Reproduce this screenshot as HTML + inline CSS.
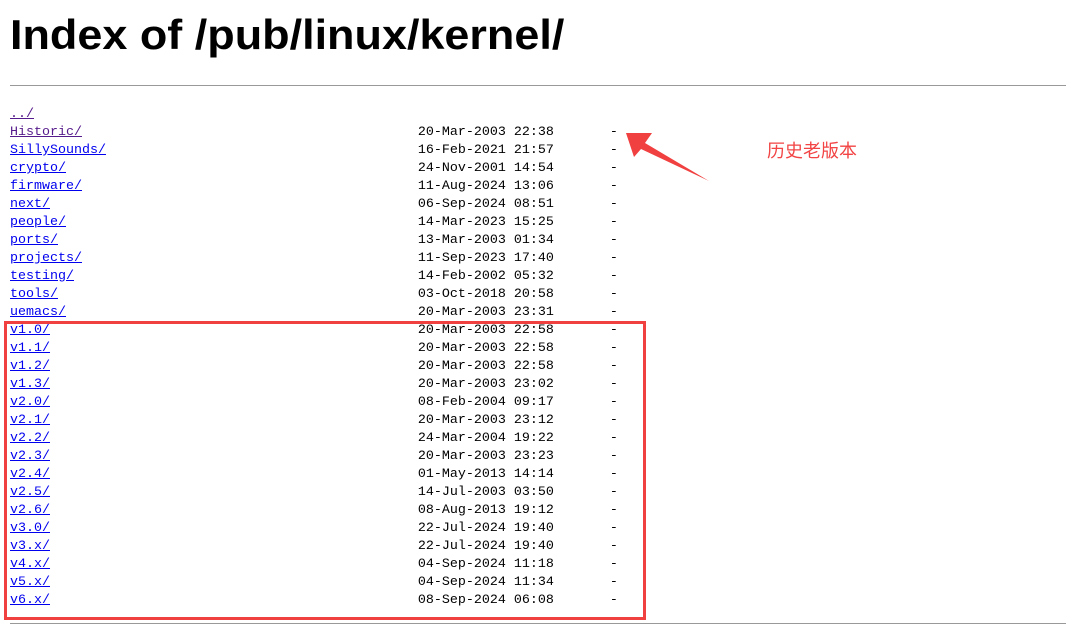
<!DOCTYPE html>
<html><head><meta charset="utf-8"><style>
body{margin:0;background:#fff;width:1066px;height:628px;overflow:hidden;position:relative}
h1{position:absolute;left:10px;top:12px;margin:0;font:bold 42px/46px "Liberation Sans",sans-serif;color:#000;transform:scaleX(1.07);transform-origin:left top;white-space:nowrap}
.hr{position:absolute;left:10px;right:0;height:1px;background:#999}
pre{position:absolute;left:10px;top:106px;margin:0;font:13.33px/18px "Liberation Mono",monospace;color:#000}
a{color:#0000ee;text-decoration:underline}
a.v{color:#551a8b}
.box{position:absolute;left:4px;top:321px;width:636px;height:293px;border:3px solid #f0403f}
.cn{position:absolute;left:767px;top:140px;font:18px/22px "Liberation Sans","Noto Sans CJK SC",sans-serif;color:#f24444}
</style></head><body>
<h1>Index of /pub/linux/kernel/</h1>
<div class="hr" style="top:85px"></div>
<pre><a class="v">../</a>
<a class="v">Historic/</a>                                          20-Mar-2003 22:38       -
<a>SillySounds/</a>                                       16-Feb-2021 21:57       -
<a>crypto/</a>                                            24-Nov-2001 14:54       -
<a>firmware/</a>                                          11-Aug-2024 13:06       -
<a>next/</a>                                              06-Sep-2024 08:51       -
<a>people/</a>                                            14-Mar-2023 15:25       -
<a>ports/</a>                                             13-Mar-2003 01:34       -
<a>projects/</a>                                          11-Sep-2023 17:40       -
<a>testing/</a>                                           14-Feb-2002 05:32       -
<a>tools/</a>                                             03-Oct-2018 20:58       -
<a>uemacs/</a>                                            20-Mar-2003 23:31       -
<a>v1.0/</a>                                              20-Mar-2003 22:58       -
<a>v1.1/</a>                                              20-Mar-2003 22:58       -
<a>v1.2/</a>                                              20-Mar-2003 22:58       -
<a>v1.3/</a>                                              20-Mar-2003 23:02       -
<a>v2.0/</a>                                              08-Feb-2004 09:17       -
<a>v2.1/</a>                                              20-Mar-2003 23:12       -
<a>v2.2/</a>                                              24-Mar-2004 19:22       -
<a>v2.3/</a>                                              20-Mar-2003 23:23       -
<a>v2.4/</a>                                              01-May-2013 14:14       -
<a>v2.5/</a>                                              14-Jul-2003 03:50       -
<a>v2.6/</a>                                              08-Aug-2013 19:12       -
<a>v3.0/</a>                                              22-Jul-2024 19:40       -
<a>v3.x/</a>                                              22-Jul-2024 19:40       -
<a>v4.x/</a>                                              04-Sep-2024 11:18       -
<a>v5.x/</a>                                              04-Sep-2024 11:34       -
<a>v6.x/</a>                                              08-Sep-2024 06:08       -
</pre>
<div class="hr" style="top:623px"></div>
<div class="box"></div>
<svg style="position:absolute;left:0;top:0" width="1066" height="628">
<polygon points="626,133 652,133 645,143 709,181 641,149 634,157" fill="#f0403f"/>
</svg>
<div class="cn">历史老版本</div>
</body></html>
